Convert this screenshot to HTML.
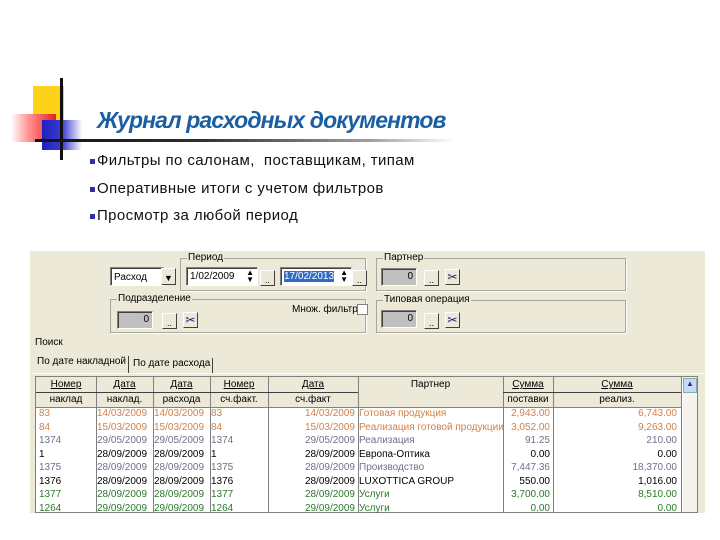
<!DOCTYPE html>
<html><head><meta charset="utf-8"><style>
*{margin:0;padding:0;box-sizing:border-box}
body{width:720px;height:540px;background:#fff;position:relative;overflow:hidden;font-family:"Liberation Sans",sans-serif}
.a{position:absolute}
.t{font-size:10px;color:#000;white-space:nowrap}
.box{position:absolute;border:1px solid #a8a89a;box-shadow:1px 1px 0 #fff}
.lg{position:absolute;top:-7px;left:6px;background:#ece9d8;padding:0 1px;font-size:10px}
.btn{position:absolute;width:15px;height:16px;background:#ece9d8;border:1px solid;border-color:#fff #404040 #404040 #fff;font-size:9px;text-align:center;line-height:18px}
.inp{position:absolute;background:#fff;border:1px solid;border-color:#808080 #fff #fff #808080;box-shadow:inset 1px 1px 0 #404040;font-size:10px;padding:2px 3px}
.gr{background:#c0c0c0;text-align:right}
.col{position:absolute;top:0;height:135px;border-left:1px solid #808080}
.row{position:absolute;left:0;width:646px;height:13px;font-size:10px;font-family:"Liberation Sans Narrow","Liberation Sans",sans-serif}
.row span{position:absolute;top:0;white-space:nowrap}
.r{text-align:right}
.bl{position:absolute;left:90px;font-size:15px;color:#111;letter-spacing:0.4px;white-space:nowrap}
.bl i{display:inline-block;width:5px;height:5px;background:#3030a0;margin-right:2px;vertical-align:1px}
</style></head><body>
<!-- decoration -->
<div class="a" style="left:33px;top:86px;width:31px;height:35px;background:#ffd21a"></div>
<div class="a" style="left:11px;top:114px;width:45px;height:28px;background:linear-gradient(90deg,#fff 0%,#ff9090 40%,#e82020 100%)"></div>
<div class="a" style="left:42px;top:120px;width:40px;height:30px;background:linear-gradient(90deg,#2020c0,#3a3ad0 50%,#fff)"></div>
<div class="a" style="left:60px;top:78px;width:3px;height:82px;background:#101010"></div>
<div class="a" style="left:35px;top:139px;width:420px;height:3px;background:linear-gradient(90deg,#101010 0%,#303030 40%,#a0a0a0 80%,#ffffff)"></div>
<div class="a" style="left:97px;top:107px;font-size:23px;font-weight:bold;font-style:italic;color:#1b5fa3;letter-spacing:-0.9px;white-space:nowrap">Журнал расходных документов</div>
<div class="bl" style="top:152px"><i></i>Фильтры по салонам,&nbsp; поставщикам, типам</div>
<div class="bl" style="top:180px"><i></i>Оперативные итоги с учетом фильтров</div>
<div class="bl" style="top:207px"><i></i>Просмотр за любой период</div>

<!-- app -->
<div class="a" style="left:30px;top:251px;width:675px;height:262px;background:#ece9d8"></div>
<div class="inp" style="left:110px;top:267px;width:54px;height:19px;padding-top:4px">Расход</div>
<div class="btn" style="left:161px;top:268px;height:17px;width:15px">▼</div>
<div class="box" style="left:180px;top:258px;width:186px;height:33px"><div class="lg">Период</div></div>
<div class="inp" style="left:186px;top:267px;width:72px;height:19px;padding-top:3px">1/02/2009 <span style="position:absolute;right:3px;top:1px;font-size:8px;line-height:7px">▲<br>▼</span></div>
<div class="btn" style="left:260px;top:270px">..</div>
<div class="inp" style="left:280px;top:267px;width:72px;height:19px;padding-top:3px"><span style="background:#316ac5;color:#fff">17/02/2013</span><span style="position:absolute;right:3px;top:1px;font-size:8px;line-height:7px;background:#fff">▲<br>▼</span></div>
<div class="btn" style="left:352px;top:270px">..</div>
<div class="box" style="left:376px;top:258px;width:250px;height:33px"><div class="lg">Партнер</div></div>
<div class="inp gr" style="left:381px;top:268px;width:36px;height:18px">0</div>
<div class="btn" style="left:424px;top:270px">..</div>
<div class="btn" style="left:445px;top:269px;color:#102080;font-size:12px;line-height:15px">✂</div>
<div class="box" style="left:110px;top:299px;width:256px;height:34px"><div class="lg">Подразделение</div></div>
<div class="inp gr" style="left:117px;top:311px;width:36px;height:18px">0</div>
<div class="btn" style="left:162px;top:313px">..</div>
<div class="btn" style="left:183px;top:312px;color:#102080;font-size:12px;line-height:15px">✂</div>
<div class="a t" style="left:292px;top:304px">Множ. фильтр</div>
<div class="a" style="left:357px;top:304px;width:11px;height:11px;background:#fff;border:1px solid #808080"></div>
<div class="box" style="left:376px;top:300px;width:250px;height:33px"><div class="lg">Типовая операция</div></div>
<div class="inp gr" style="left:381px;top:310px;width:36px;height:18px">0</div>
<div class="btn" style="left:424px;top:313px">..</div>
<div class="btn" style="left:445px;top:312px;color:#102080;font-size:12px;line-height:15px">✂</div>
<div class="a t" style="left:35px;top:337px">Поиск</div>
<div class="a t" style="left:35px;top:356px;padding:0 2px;background:#ece9d8;border-right:1px solid #404040;height:17px">По дате накладной</div>
<div class="a t" style="left:131px;top:358px;padding:0 2px;border-right:1px solid #404040;height:15px">По дате расхода</div>
<div class="a" style="left:33px;top:373px;width:672px;height:1px;background:#fff"></div>

<!-- grid -->
<div class="a" style="left:35px;top:376px;width:663px;height:137px;background:#fff;border:1px solid #808080;overflow:hidden">
 <div class="a" style="left:0;top:0;width:646px;height:31px;background:#ece9d8;border-bottom:1px solid #808080"></div>
 <div class="col" style="left:60px"></div><div class="col" style="left:117px"></div><div class="col" style="left:174px"></div><div class="col" style="left:232px"></div><div class="col" style="left:322px"></div><div class="col" style="left:467px"></div><div class="col" style="left:517px"></div><div class="col" style="left:645px"></div>
 <div class="a" style="left:0;top:0;width:646px;height:31px;font-size:10px">
  <span class="a" style="left:0;width:60px;top:2px;text-align:center;text-decoration:underline">Номер</span>
  <span class="a" style="left:60px;width:57px;top:2px;text-align:center;text-decoration:underline">Дата</span>
  <span class="a" style="left:117px;width:57px;top:2px;text-align:center;text-decoration:underline">Дата</span>
  <span class="a" style="left:174px;width:58px;top:2px;text-align:center;text-decoration:underline">Номер</span>
  <span class="a" style="left:232px;width:90px;top:2px;text-align:center;text-decoration:underline">Дата</span>
  <span class="a" style="left:322px;width:145px;top:2px;text-align:center">Партнер</span>
  <span class="a" style="left:467px;width:50px;top:2px;text-align:center;text-decoration:underline">Сумма</span>
  <span class="a" style="left:517px;width:128px;top:2px;text-align:center;text-decoration:underline">Сумма</span>
  <div class="a" style="left:0;top:15px;width:322px;height:1px;background:#404040"></div>
  <div class="a" style="left:467px;top:15px;width:178px;height:1px;background:#404040"></div>
  <span class="a" style="left:0;width:60px;top:17px;text-align:center">наклад</span>
  <span class="a" style="left:60px;width:57px;top:17px;text-align:center">наклад.</span>
  <span class="a" style="left:117px;width:57px;top:17px;text-align:center">расхода</span>
  <span class="a" style="left:174px;width:58px;top:17px;text-align:center">сч.факт.</span>
  <span class="a" style="left:232px;width:90px;top:17px;text-align:center">сч.факт</span>
  <span class="a" style="left:467px;width:50px;top:17px;text-align:center">поставки</span>
  <span class="a" style="left:517px;width:128px;top:17px;text-align:center">реализ.</span>
 </div>
 <div class="a" style="left:647px;top:0;width:15px;height:135px;background:#f4f3ee"></div>
 <div class="a" style="left:647px;top:1px;width:14px;height:15px;background:#c8d8f8;border:1px solid #8aa;font-size:8px;text-align:center;color:#336">▲</div>
</div>
<div class="a" style="left:35px;top:408px;width:646px;height:105px;overflow:hidden">
<div class="row" style="top:0;color:#d0804a"><span style="left:4px">83</span><span style="left:62px">14/03/2009</span><span style="left:119px">14/03/2009</span><span style="left:176px">83</span><span style="left:234px;width:86px" class="r">14/03/2009</span><span style="left:324px">Готовая продукция</span><span style="left:469px;width:46px" class="r">2,943.00</span><span style="left:519px;width:123px" class="r">6,743.00</span></div>
<div class="row" style="top:13.5px;color:#d0804a"><span style="left:4px">84</span><span style="left:62px">15/03/2009</span><span style="left:119px">15/03/2009</span><span style="left:176px">84</span><span style="left:234px;width:86px" class="r">15/03/2009</span><span style="left:324px">Реализация готовой продукции</span><span style="left:469px;width:46px" class="r">3,052.00</span><span style="left:519px;width:123px" class="r">9,263.00</span></div>
<div class="row" style="top:27px;color:#70708a"><span style="left:4px">1374</span><span style="left:62px">29/05/2009</span><span style="left:119px">29/05/2009</span><span style="left:176px">1374</span><span style="left:234px;width:86px" class="r">29/05/2009</span><span style="left:324px">Реализация</span><span style="left:469px;width:46px" class="r">91.25</span><span style="left:519px;width:123px" class="r">210.00</span></div>
<div class="row" style="top:40.5px;color:#000"><span style="left:4px">1</span><span style="left:62px">28/09/2009</span><span style="left:119px">28/09/2009</span><span style="left:176px">1</span><span style="left:234px;width:86px" class="r">28/09/2009</span><span style="left:324px">Европа-Оптика</span><span style="left:469px;width:46px" class="r">0.00</span><span style="left:519px;width:123px" class="r">0.00</span></div>
<div class="row" style="top:54px;color:#70708a"><span style="left:4px">1375</span><span style="left:62px">28/09/2009</span><span style="left:119px">28/09/2009</span><span style="left:176px">1375</span><span style="left:234px;width:86px" class="r">28/09/2009</span><span style="left:324px">Производство</span><span style="left:469px;width:46px" class="r">7,447.36</span><span style="left:519px;width:123px" class="r">18,370.00</span></div>
<div class="row" style="top:67.5px;color:#000"><span style="left:4px">1376</span><span style="left:62px">28/09/2009</span><span style="left:119px">28/09/2009</span><span style="left:176px">1376</span><span style="left:234px;width:86px" class="r">28/09/2009</span><span style="left:324px">LUXOTTICA GROUP</span><span style="left:469px;width:46px" class="r">550.00</span><span style="left:519px;width:123px" class="r">1,016.00</span></div>
<div class="row" style="top:81px;color:#2a7a2a"><span style="left:4px">1377</span><span style="left:62px">28/09/2009</span><span style="left:119px">28/09/2009</span><span style="left:176px">1377</span><span style="left:234px;width:86px" class="r">28/09/2009</span><span style="left:324px">Услуги</span><span style="left:469px;width:46px" class="r">3,700.00</span><span style="left:519px;width:123px" class="r">8,510.00</span></div>
<div class="row" style="top:94.5px;color:#2a7a2a"><span style="left:4px">1264</span><span style="left:62px">29/09/2009</span><span style="left:119px">29/09/2009</span><span style="left:176px">1264</span><span style="left:234px;width:86px" class="r">29/09/2009</span><span style="left:324px">Услуги</span><span style="left:469px;width:46px" class="r">0.00</span><span style="left:519px;width:123px" class="r">0.00</span></div>
</div>
</body></html>
